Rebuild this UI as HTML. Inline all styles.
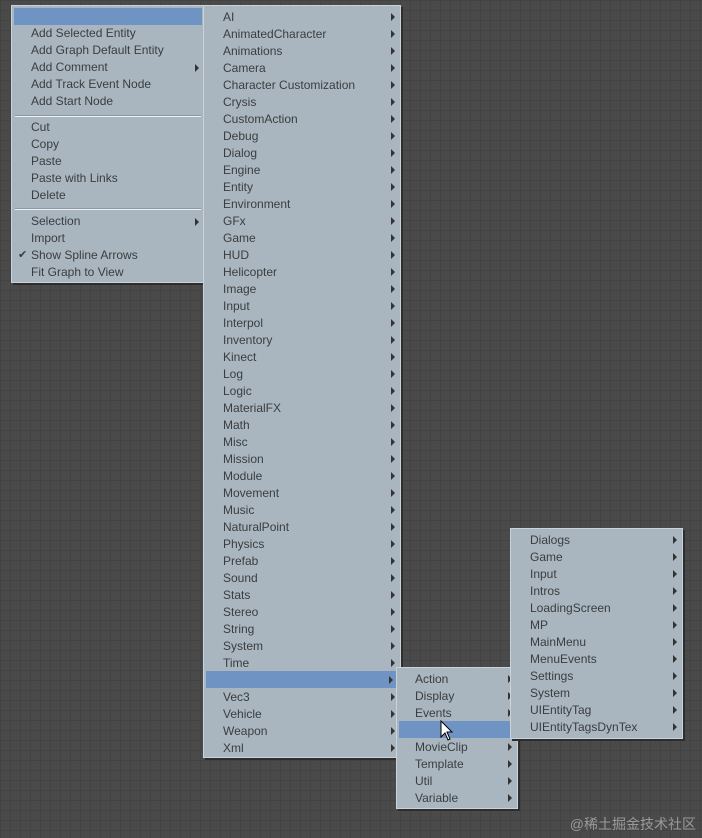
<!DOCTYPE html><html><head><style>
body{margin:0;width:702px;height:838px;overflow:hidden;background-color:#4a4a4a;
background-image:linear-gradient(#434343 1px,transparent 1px),linear-gradient(90deg,#434343 1px,transparent 1px);background-size:10px 10px;
font-family:"Liberation Sans",sans-serif;font-size:12px;color:#3a3d40;position:relative}
.m{position:absolute;background:#a9b6bf;border:1px solid #c9d3da;box-shadow:2px 2px 0 #2e2e2e;box-sizing:border-box}
.i{position:absolute;left:0;right:0;height:17px;line-height:19px;white-space:nowrap}
.a::after{content:"";position:absolute;right:5px;top:5px;border-left:4px solid #333;border-top:4px solid transparent;border-bottom:4px solid transparent}
.h{background:#6f94c4;left:2px;right:2px}
.n::after{display:none}
.s{position:absolute;left:3px;right:3px;height:1px;background:#eef2f4;border-top:1px solid #8e9aa3}
.wm{position:absolute;right:6px;bottom:4px;color:#9a9a9a;font-family:"Liberation Sans","Noto Sans CJK SC",sans-serif;font-size:14px}
</style></head><body>
<div class="m" style="left:11px;top:5px;width:194px;height:278px">
<div class="i h" style="top:2px"></div>
<div style="position:absolute;left:19px;top:19px;line-height:17px">Add Selected Entity<br>Add Graph Default Entity<br>Add Comment<br>Add Track Event Node<br>Add Start Node</div>
<div class="i a" style="top:53px"></div>
<div class="s" style="top:109px"></div>
<div style="position:absolute;left:19px;top:113px;line-height:17px">Cut<br>Copy<br>Paste<br>Paste with Links<br>Delete</div>
<div class="s" style="top:202px"></div>
<div style="position:absolute;left:19px;top:207px;line-height:17px">Selection<br>Import<br>Show Spline Arrows<br>Fit Graph to View</div>
<div class="i a" style="top:207px"></div>
<div style="position:absolute;left:6px;top:241px;line-height:17px;font-size:11px">✔</div>
</div>

<div class="m" style="left:203px;top:5px;width:198px;height:753px" id="m2"></div>
<div class="m" style="left:396px;top:667px;width:122px;height:142px" id="m3"></div>
<div class="m" style="left:510px;top:528px;width:173px;height:211px" id="m4"></div>
<div class="wm">@稀土掘金技术社区</div>
<svg style="position:absolute;left:440px;top:720px" width="14" height="22" viewBox="0 0 14 22"><path d="M1 1 L1 17 L5 13 L8 20 L10 19 L7 12 L12 12 Z" fill="#fff" stroke="#000" stroke-width="1"/></svg>
<script>
function fill(id,items,hl,top,left,noarr){var m=document.getElementById(id),h='';items.forEach(function(t,k){var y=top+k*17;
h+='<div class="i a'+(k===hl?' h':'')+(k===hl&&noarr?' n':'')+'" style="top:'+y+'px;padding-left:'+(k===hl?left-2:left)+'px">'+t+'</div>';});m.innerHTML=h;}
fill('m2',["AI","AnimatedCharacter","Animations","Camera","Character Customization","Crysis","CustomAction","Debug","Dialog","Engine","Entity","Environment","GFx","Game","HUD","Helicopter","Image","Input","Interpol","Inventory","Kinect","Log","Logic","MaterialFX","Math","Misc","Mission","Module","Movement","Music","NaturalPoint","Physics","Prefab","Sound","Stats","Stereo","String","System","Time","","Vec3","Vehicle","Weapon","Xml"],39,2,19,false);
fill('m3',["Action","Display","Events","","MovieClip","Template","Util","Variable"],3,2,18,true);
fill('m4',["Dialogs","Game","Input","Intros","LoadingScreen","MP","MainMenu","MenuEvents","Settings","System","UIEntityTag","UIEntityTagsDynTex"],-1,2,19,false);
</script>
</body></html>
